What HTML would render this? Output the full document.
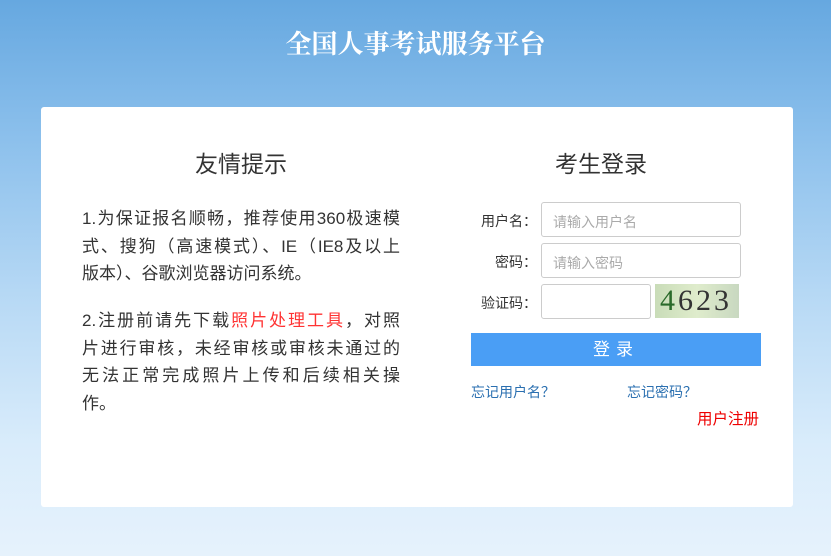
<!DOCTYPE html>
<html><head><meta charset="utf-8"><style>
*{margin:0;padding:0;box-sizing:border-box}
body{width:831px;height:556px;overflow:hidden;position:relative;font-family:"Liberation Sans","Noto Sans CJK SC",sans-serif;
background:linear-gradient(180deg,#66a8e0 0%,#8cc0ec 25%,#b9daf5 55%,#d9ecfb 80%,#e6f2fc 100%);}
.h{position:absolute;top:24px;left:0;width:831px;text-align:center;color:#fff;font-size:26px;font-weight:bold;font-family:"Liberation Serif","Noto Serif CJK SC",serif}
.card{position:absolute;left:41px;top:107px;width:752px;height:400px;background:#fff;border-radius:3px}
.t{position:absolute;font-size:23px;color:#333;text-align:center;width:200px}
.p{position:absolute;left:82px;width:318px;font-size:17px;line-height:27.5px;color:#333}
.p div{text-align:justify;text-align-last:justify;white-space:nowrap}
.p div.l{text-align-last:left}
.lab{position:absolute;font-size:14px;color:#333;text-align:right;width:82px;left:455px}
.in{position:absolute;left:541px;width:200px;height:35px;border:1px solid #ccc;border-radius:3px;font-size:14px;color:#aaa;padding:9px 11px}
.btn{position:absolute;left:471px;top:333px;width:290px;height:33px;background:#4a9ef5;color:#fff;font-size:17px;text-align:center;line-height:33px;letter-spacing:6px}
.lk{position:absolute;font-size:14px;color:#2a6fb0}
</style></head><body>
<div class="h">全国人事考试服务平台</div>
<div class="card"></div>
<div class="t" style="left:141px;top:145px">友情提示</div>
<div class="t" style="left:501px;top:145px">考生登录</div>
<div class="p" style="top:205px"><div>1.为保证报名顺畅，推荐使用360极速模</div><div>式、搜狗（高速模式）、IE（IE8及以上</div><div class="l">版本）、谷歌浏览器访问系统。</div></div>
<div class="p" style="top:307px"><div>2.注册前请先下载<span style="color:#f33">照片处理工具</span>，对照</div><div>片进行审核，未经审核或审核未通过的</div><div>无法正常完成照片上传和后续相关操</div><div class="l">作。</div></div>
<div class="lab" style="top:211px">用户名：</div>
<div class="lab" style="top:252px">密码：</div>
<div class="lab" style="top:293px">验证码：</div>
<div class="in" style="top:202px">请输入用户名</div>
<div class="in" style="top:243px">请输入密码</div>
<div class="in" style="top:284px;width:110px"></div>
<div style="position:absolute;left:655px;top:284px;width:84px;height:34px;background:linear-gradient(90deg,#c9dcb8,#dfeccc,#c8d8c0);font-family:'Liberation Serif',serif;font-size:30px;color:#333;letter-spacing:3px;padding-left:5px;line-height:34px"><span style="color:#2a6a2a">4</span>623</div>
<div class="btn">登录</div>
<div class="lk" style="left:471px;top:382px">忘记用户名？</div>
<div class="lk" style="left:627px;top:382px">忘记密码？</div>
<div class="lk" style="left:697px;top:407px;color:#e00;font-size:15.5px">用户注册</div>
</body></html>
